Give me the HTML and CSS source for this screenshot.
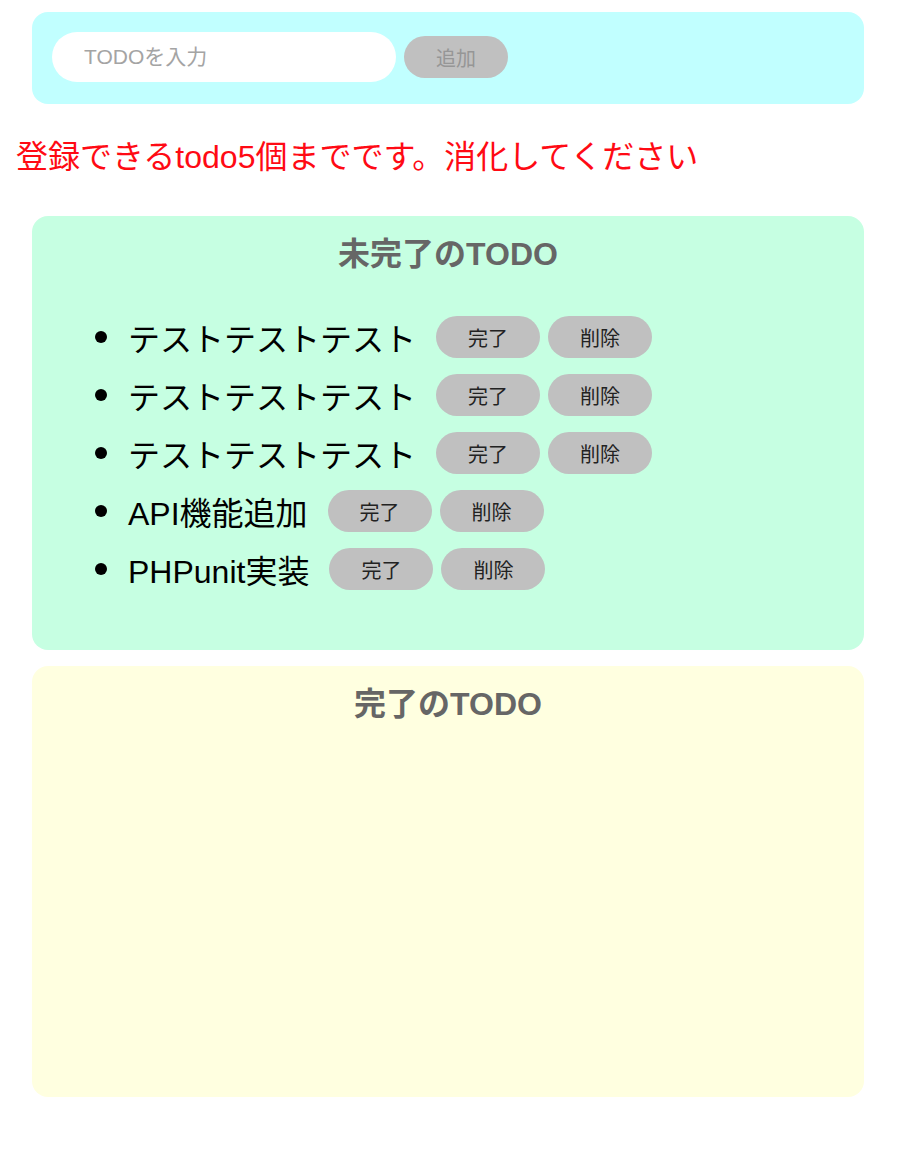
FILE: index.html
```html
<!DOCTYPE html>
<html lang="ja">
<head>
<meta charset="utf-8">
<title>TODO</title>
<link rel="stylesheet" href="styles.css">
</head>
<body>
  <div class="input-area">
    <input class="todo-input" type="text" placeholder="TODOを入力">
    <button class="add-btn" disabled>追加</button>
  </div>
  <p class="limit-msg">登録できるtodo5個までです。消化してください</p>
  <div class="area incomplete-area">
    <p class="title">未完了のTODO</p>
    <ul class="todo-list">
      <li class="list-row"><span class="todo-text">テストテストテスト</span><button class="row-btn">完了</button><button class="row-btn">削除</button></li>
      <li class="list-row"><span class="todo-text">テストテストテスト</span><button class="row-btn">完了</button><button class="row-btn">削除</button></li>
      <li class="list-row"><span class="todo-text">テストテストテスト</span><button class="row-btn">完了</button><button class="row-btn">削除</button></li>
      <li class="list-row"><span class="todo-text">API機能追加</span><button class="row-btn">完了</button><button class="row-btn">削除</button></li>
      <li class="list-row"><span class="todo-text">PHPunit実装</span><button class="row-btn">完了</button><button class="row-btn">削除</button></li>
    </ul>
  </div>
  <div class="area complete-area">
    <p class="title">完了のTODO</p>
  </div>
</body>
</html>
```
FILE: styles.css
```css
* { box-sizing: border-box; }
body {
  margin: 0;
  font-family: "Liberation Sans", "Noto Sans CJK JP", sans-serif;
  background: #ffffff;
}
.input-area {
  margin: 12px 0 0 32px;
  width: 832px;
  height: 92px;
  padding: 20px;
  background: #c1ffff;
  border-radius: 16px;
  display: flex;
  align-items: flex-start;
}
.todo-input {
  width: 344px;
  height: 50px;
  border: none;
  border-radius: 25px;
  background: #ffffff;
  padding: 0 32px;
  font-family: inherit;
  font-size: 21px;
  outline: none;
}
.todo-input::placeholder { color: #a4a4a4; }
.add-btn {
  margin: 4px 0 0 8px;
  width: 104px;
  height: 42px;
  border: none;
  border-radius: 21px;
  background: #c0c0c0;
  color: #969696;
  font-family: inherit;
  font-size: 20px;
  padding: 0;
}
.limit-msg {
  margin: 30px 0 0 16px;
  color: #ff0a14;
  font-size: 32px;
  line-height: 46px;
}
.area {
  margin-left: 32px;
  width: 832px;
  border-radius: 16px;
  padding: 16px;
}
.incomplete-area {
  margin-top: 36px;
  background: #c6ffe2;
  min-height: 434px;
}
.complete-area {
  margin-top: 16px;
  background: #ffffe0;
  min-height: 431px;
}
.title {
  margin: 0;
  text-align: center;
  font-weight: bold;
  color: #666666;
  font-size: 32px;
  line-height: 44px;
}
.todo-list {
  list-style: none;
  margin: 40px 0 28px;
  padding: 0 0 0 47px;
}
.list-row {
  display: flex;
  align-items: center;
  height: 42px;
  margin-bottom: 16px;
}
.list-row::before {
  content: "";
  width: 12px;
  height: 12px;
  border-radius: 50%;
  background: #000000;
  margin-right: 21px;
  flex: none;
}
.todo-text {
  font-size: 32px;
  color: #000000;
  margin-right: 20px;
  white-space: nowrap;
}
.row-btn {
  width: 104px;
  height: 42px;
  border: none;
  border-radius: 21px;
  background: #c0c0c0;
  color: #222222;
  font-family: inherit;
  font-size: 20px;
  padding: 0;
  margin-right: 8px;
  flex: none;
}
```
